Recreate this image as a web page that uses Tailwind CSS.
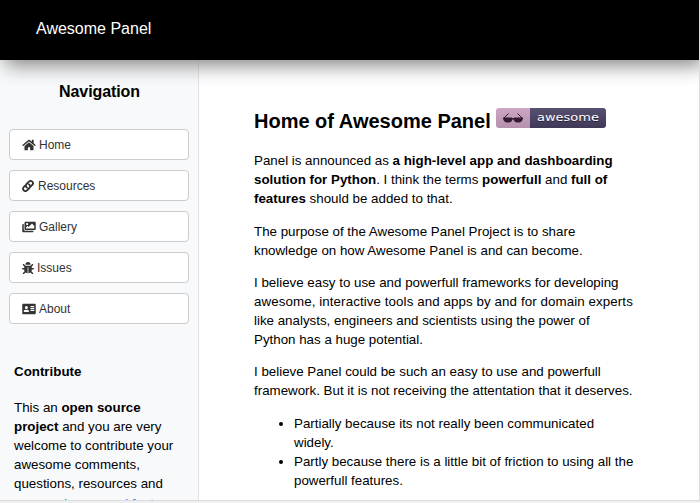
<!DOCTYPE html>
<html lang="en">
<head>
<meta charset="utf-8">
<title>Awesome Panel</title>
<script src="https://cdn.jsdelivr.net/npm/@tailwindcss/browser@4"></script>
</head>
<body class="h-[503px] overflow-hidden bg-[#f0f0f0] font-['Liberation_Sans',Arial,sans-serif] text-[13.33px] leading-[19px] text-black">
<div class="flex h-[501px] w-[700px] flex-col overflow-hidden border-r border-b border-[#dcdcdc] bg-white">
  <header class="relative z-10 flex h-[60px] shrink-0 items-center bg-black pl-9 text-[16px] text-white shadow-[5px_5px_20px_#808080]"><span class="-mt-[3px]">Awesome Panel</span></header>
  <div class="flex min-h-0 flex-1">
    <aside class="w-[199px] shrink-0 overflow-hidden border-r border-[#dee2e6] bg-[#f8f9fa]">
      <h2 class="mt-[22px] pl-px text-center text-[16px] leading-[20px] font-bold tracking-[-0.1px]">Navigation</h2>
      <nav class="mt-[27px] ml-[9px] flex w-[180px] flex-col gap-[10px] text-[12px] text-[#333]">
        <a class="flex h-[31px] items-center gap-[3px] rounded-[4px] border border-[#ccc] bg-white pl-3"><svg class="h-3 w-[14px]" viewBox="0 0 576 512" fill="currentColor"><path d="M280 148 96 300v164c0 9 7 16 16 16h112c9 0 16-7 16-16v-96c0-9 7-16 16-16h64c9 0 16 7 16 16v96c0 9 7 16 16 16h112c9 0 16-7 16-16V300L296 148c-5-4-11-4-16 0zM572 251l-84-69V44c0-7-5-12-12-12h-56c-7 0-12 5-12 12v72l-90-74c-17-14-43-14-60 0L4 251c-5 4-6 12-2 17l26 31c4 5 12 6 17 2l235-194c5-4 11-4 16 0l235 194c5 4 13 3 17-2l26-31c4-5 3-13-2-17z"/></svg><span class="pt-px">Home</span></a>
        <a class="flex h-[31px] items-center gap-1 rounded-[4px] border border-[#ccc] bg-white pl-3"><svg class="size-3" viewBox="0 0 512 512" fill="none" stroke="currentColor" stroke-width="78" stroke-linecap="round" stroke-linejoin="round"><path d="M211 326c-53-43-56-113-15-155L296 70c40-40 102-40 142 0s40 102 0 142l-64 64M301 186c53 43 56 113 15 155L216 442c-40 40-102 40-142 0s-40-102 0-142l64-64"/></svg><span class="pt-px">Resources</span></a>
        <a class="flex h-[31px] items-center gap-[3px] rounded-[4px] border border-[#ccc] bg-white pl-3"><svg class="h-3 w-[14px]" viewBox="0 0 576 512" fill="currentColor"><path fill-rule="evenodd" d="M480 416v16c0 27-21 48-48 48H48c-27 0-48-21-48-48V176c0-27 21-48 48-48h16v208c0 44 36 80 80 80h336zM144 32h384c27 0 48 21 48 48v256c0 27-21 48-48 48H144c-27 0-48-21-48-48V80c0-27 21-48 48-48zm112 96a48 48 0 1 0-96 0 48 48 0 0 0 96 0zm-96 144v48h352V208l-87-88c-5-4-13-4-18 0L272 256l-39-40c-5-4-13-4-18 0z"/></svg><span class="pt-px">Gallery</span></a>
        <a class="flex h-[31px] items-center gap-[3px] rounded-[4px] border border-[#ccc] bg-white pl-3"><svg class="size-3" viewBox="0 0 512 512" fill="currentColor"><path d="M512 289c-1 17-15 31-33 31h-63v16c0 22-5 43-14 62l69 67c12 13 12 33 0 46-13 12-33 12-46 0l-60-60c-28 19-57 29-93 29V236c0-7-5-12-12-12h-8c-7 0-12 5-12 12v244c-36 0-65-10-93-29l-60 60c-13 12-33 12-46 0-12-13-12-33 0-46l69-67c-9-19-14-40-14-62v-16H33c-18 0-32-14-33-31-1-18 14-33 32-33h64v-59L41 143c-12-13-12-33 0-46 13-12 33-12 46 0l63 63h212l63-63c13-12 33-12 46 0 12 13 12 33 0 46l-55 54v59h64c18 0 33 15 32 33zM257 0c-62 0-112 50-112 112h224C369 50 319 0 257 0z"/></svg><span class="pt-px">Issues</span></a>
        <a class="flex h-[31px] items-center gap-[3px] rounded-[4px] border border-[#ccc] bg-white pl-3"><svg class="h-3 w-[14px]" viewBox="0 0 576 512" fill="currentColor"><path fill-rule="evenodd" d="M528 32H48C21 32 0 53 0 80v352c0 27 21 48 48 48h480c27 0 48-21 48-48V80c0-27-21-48-48-48zM176 128a64 64 0 1 1 0 128 64 64 0 0 1 0-128zM64 365c0-45 30-77 67-77h90c37 0 67 32 67 77 0 11-10 19-22 19H86c-12 0-22-8-22-19zM352 128h160v48H352zm0 80h160v48H352zm0 80h160v48H352z"/></svg><span class="pt-px">About</span></a>
      </nav>
      <div class="mt-[38px] pl-[14px] whitespace-nowrap">
        <h3 class="mb-[17px] font-bold">Contribute</h3>
        <p>This an <b>open source</b><br><b>project</b> and you are very<br>welcome to contribute your<br>awesome comments,<br>questions, resources and</p>
        <a class="mt-px block text-[#2b7de9]">process issues and features</a>
      </div>
    </aside>
    <main class="flex-1 pt-12 pl-[55px] whitespace-nowrap">
      <h1 class="flex h-[27px] text-[20px] leading-[27px] font-bold"><span class="w-[242px]">Home of Awesome Panel</span>
        <svg class="h-5 w-[110px]" viewBox="0 0 110 20"><defs><linearGradient id="p" x2="0" y2="1"><stop stop-color="#cca6c4"/><stop offset="1" stop-color="#b590af"/></linearGradient><linearGradient id="v" x2="0" y2="1"><stop stop-color="#585070"/><stop offset="1" stop-color="#403857"/></linearGradient></defs><path fill="url(#p)" d="M3 0h31v20H3q-3 0-3-3V3q0-3 3-3z"/><path fill="url(#v)" d="M34 0h73q3 0 3 3v14q0 3-3 3H34z"/><path d="M12.5 5.5 8 10M21.500 5.500 26 10" stroke="#331c32" fill="none"/><path fill="#331c32" d="M7 9.500 15.500 9.500Q17 10.500 18.500 9.500L27 9.500V10.500Q26 14.500 23 14.500H21Q18.500 14.500 17.500 11.500H16.500Q15.500 14.500 13 14.500H11Q8 14.500 7 10.500z"/><g font-family="DejaVu Sans" font-weight="400" font-size="11"><text x="41" y="14" textLength="62" lengthAdjust="spacingAndGlyphs" fill="#241e34">awesome</text><text x="41" y="13" textLength="62" lengthAdjust="spacingAndGlyphs" fill="#fff">awesome</text></g></svg></h1>
      <div class="mt-4 flex flex-col gap-[13px]">
        <p>Panel is announced as <b>a high-level app and dashboarding</b><br><b>solution for Python</b>. I think the terms <b>powerfull</b> and <b>full of</b><br><b>features</b> should be added to that.</p>
        <p class="mt-px">The purpose of the Awesome Panel Project is to share<br>knowledge on how Awesome Panel is and can become.</p>
        <p>I believe easy to use and powerfull frameworks for developing<br><span class="tracking-[0.09px]">awesome, interactive tools and apps by and for domain experts</span><br>like analysts, engineers and scientists using the power of<br>Python has a huge potential.</p>
        <p>I believe Panel could be such an easy to use and powerfull<br>framework. But it is not receiving the attentation that it deserves.</p>
        <ul class="mt-px list-disc pl-10"><li>Partially because its not really been communicated<br>widely.</li><li>Partly because there is a little bit of friction to using all the<br>powerfull features.</li></ul>
      </div>
    </main>
  </div>
</div>
</body>
</html>
